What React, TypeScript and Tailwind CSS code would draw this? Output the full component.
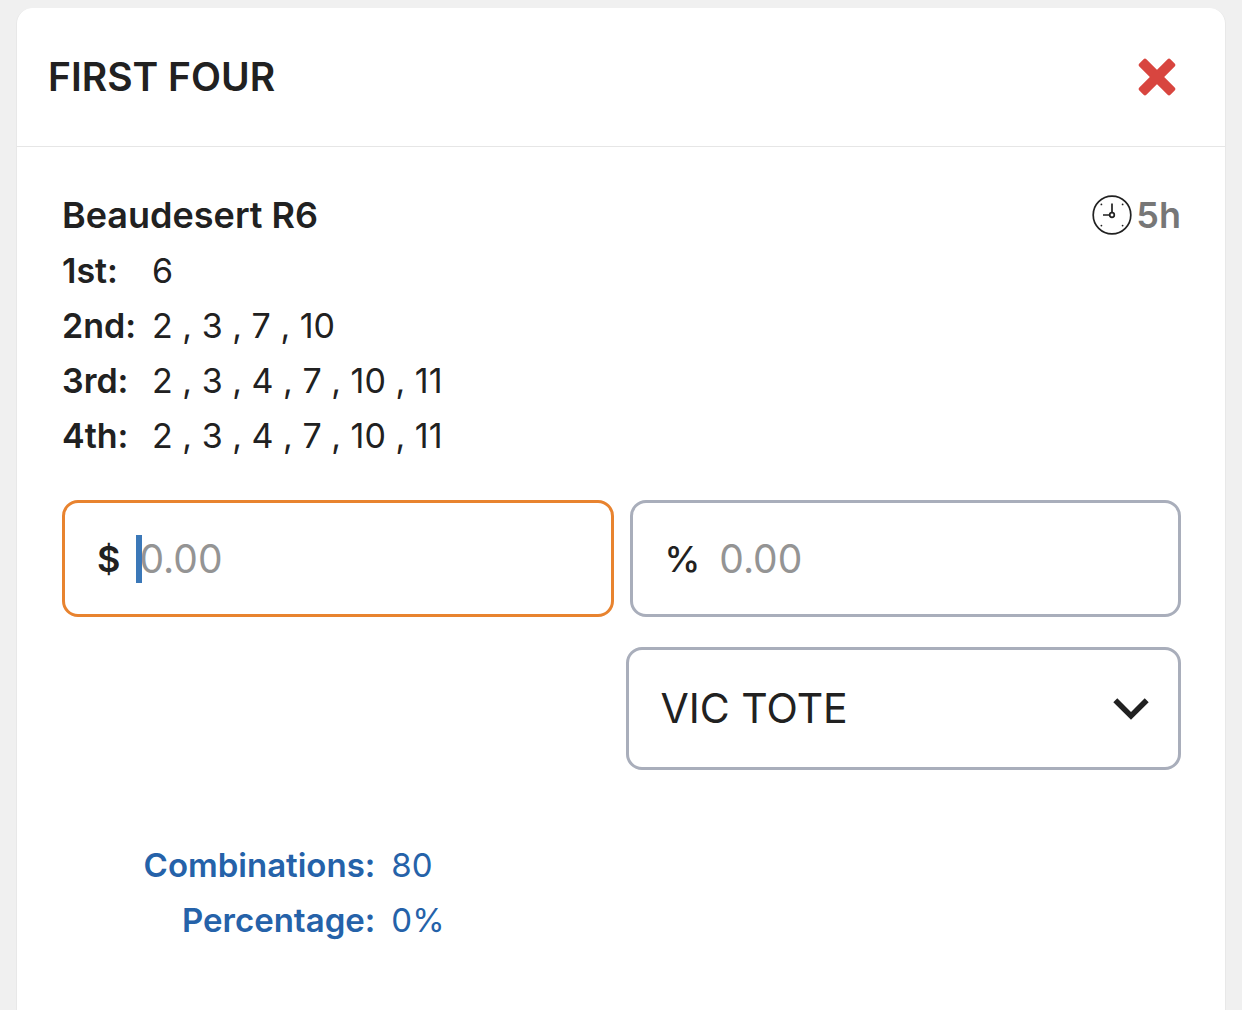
import React from "react";

type TPick = { place: string; runners: number[] };

const picks: TPick[] = [
  { place: "1st", runners: [6] },
  { place: "2nd", runners: [2, 3, 7, 10] },
  { place: "3rd", runners: [2, 3, 4, 7, 10, 11] },
  { place: "4th", runners: [2, 3, 4, 7, 10, 11] },
];

const CloseIcon = () => (
  <svg viewBox="0 0 38 38" className="h-[38px] w-[38px]" aria-hidden="true">
    <g fill="#d8453f">
      <rect x="-3" y="14" width="44" height="10" rx="2" transform="rotate(45 19 19)" />
      <rect x="-3" y="14" width="44" height="10" rx="2" transform="rotate(-45 19 19)" />
    </g>
  </svg>
);

const ClockIcon = () => (
  <svg viewBox="0 0 40 40" className="h-10 w-10" fill="none" stroke="#212121" aria-hidden="true">
    <circle cx="20" cy="20" r="18.8" strokeWidth="1.7" />
    <path d="M20 8.5v9M11 20h6.5" strokeWidth="1.7" />
    <circle cx="20" cy="20" r="2.3" strokeWidth="1.7" />
    <g fill="#212121" stroke="none">
      <circle cx="9.4" cy="9.4" r="0.9" />
      <circle cx="30.6" cy="9.4" r="0.9" />
      <circle cx="9.4" cy="30.6" r="0.9" />
      <circle cx="30.6" cy="30.6" r="0.9" />
    </g>
  </svg>
);

const ChevronIcon = () => (
  <svg
    viewBox="0 0 36 24"
    className="pointer-events-none absolute top-1/2 right-8 h-6 w-9 -translate-y-1/2"
    fill="none"
    aria-hidden="true"
  >
    <path d="M2.3 3.2 18 18.9 33.7 3.2" stroke="#212121" strokeWidth="5.6" />
  </svg>
);

const App = () => {
  return (
    <div className="flex min-h-screen flex-col bg-[#f0f0f0] px-4 pt-2 font-['Inter',sans-serif] text-[#212121]">
      <main className="grow rounded-t-2xl border-x border-[#e8e8e8] bg-white">
        <header className="flex items-center justify-between border-b border-[#e6e6e6] py-[39px] pr-[49px] pl-[31px]">
          <h1 className="text-[39px] leading-[60px] font-semibold">FIRST FOUR</h1>
          <button type="button" aria-label="Close">
            <CloseIcon />
          </button>
        </header>

        <section className="pt-10 pr-11 pb-12 pl-[45px]">
          <div className="flex items-center justify-between text-[36px] leading-[56px] font-semibold">
            <h2>Beaudesert R6</h2>
            <p className="flex items-center gap-1 text-[#777777]">
              <ClockIcon />
              5h
            </p>
          </div>

          {/* selections */}
          <dl className="grid grid-cols-[90px_1fr] text-[34px] leading-[55px]">
            {picks.map((pick) => (
              <React.Fragment key={pick.place}>
                <dt className="font-semibold">{pick.place}:</dt>
                <dd>{pick.runners.join(" , ")}</dd>
              </React.Fragment>
            ))}
          </dl>

          {/* stake */}
          <div className="mt-[37px] grid grid-cols-2 gap-4">
            <label className="flex h-[117px] items-center rounded-2xl border-3 border-[#e8832f] px-8">
              <span className="text-[36px] font-semibold">$</span>
              <span className="relative ml-4 min-w-0 grow">
                <span className="absolute top-1/2 left-0 h-12 w-[6px] -translate-y-1/2 bg-[#3b78b8]" />
                <input
                  type="text"
                  inputMode="decimal"
                  placeholder="0.00"
                  aria-label="Stake amount"
                  className="block w-full pl-[3px] text-[39px] leading-[60px] caret-transparent outline-none placeholder:text-[#949494]"
                />
              </span>
            </label>
            <label className="flex h-[117px] items-center rounded-2xl border-3 border-[#a9aebb] px-8">
              <span className="text-[36px] font-medium">%</span>
              <input
                type="text"
                inputMode="decimal"
                placeholder="0.00"
                aria-label="Stake percentage"
                className="ml-4 block w-full min-w-0 pl-[3px] text-[39px] leading-[60px] outline-none placeholder:text-[#949494]"
              />
            </label>
          </div>

          {/* tote */}
          <div className="mt-[30px] flex justify-end">
            <div className="relative w-[calc(50%-4px)]">
              <select
                aria-label="Tote"
                className="h-[123px] w-full appearance-none rounded-2xl border-3 border-[#a9aebb] bg-white pr-20 pl-8 text-[41px]"
              >
                <option>VIC TOTE</option>
              </select>
              <ChevronIcon />
            </div>
          </div>

          {/* totals */}
          <dl className="mt-[68px] grid grid-cols-[28%_1fr] gap-x-4 text-[33px] leading-[55px] text-[#2562a9]">
            <dt className="text-right font-semibold">Combinations:</dt>
            <dd>80</dd>
            <dt className="text-right font-semibold">Percentage:</dt>
            <dd>0%</dd>
          </dl>
        </section>
      </main>
    </div>
  );
};

export default App;
